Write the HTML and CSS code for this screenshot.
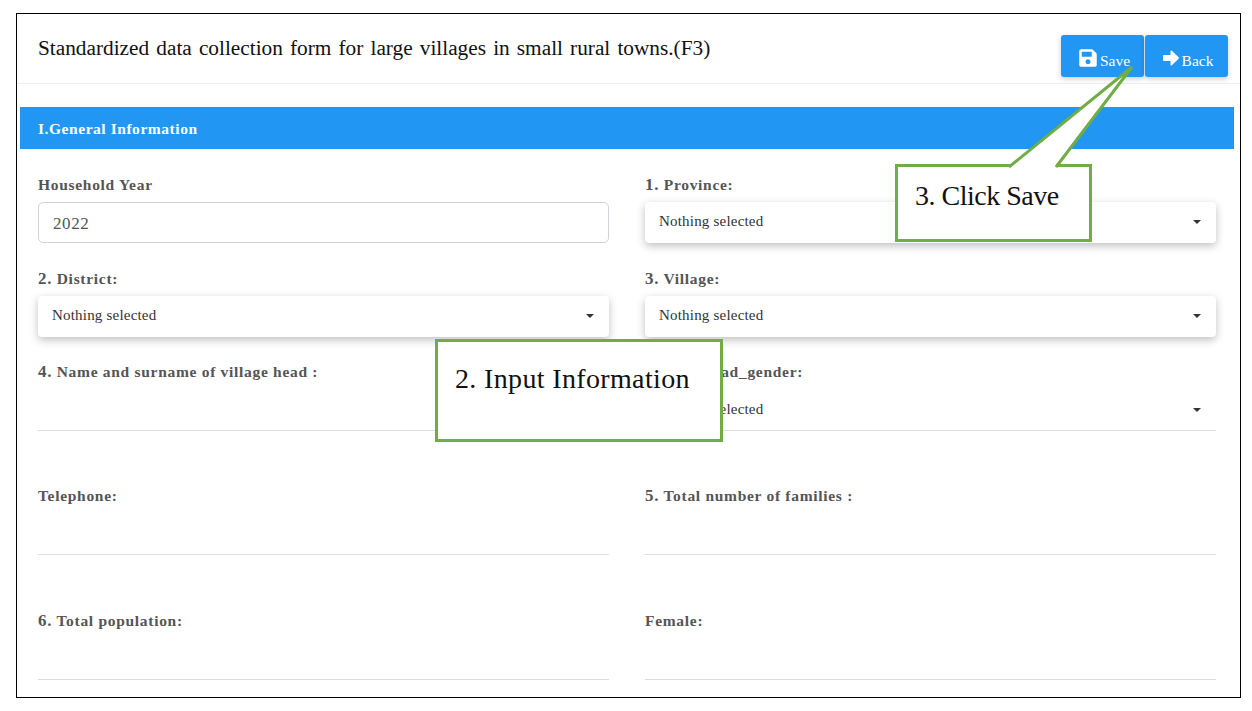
FILE: index.html
```html
<!DOCTYPE html>
<html lang="en">
<head>
<meta charset="utf-8">
<title>Standardized data collection form</title>
<link rel="stylesheet" href="styles.css">
</head>
<body>
<main class="frame">
  <header class="top">
    <h1 class="title">Standardized data collection form for large villages in small rural towns.(F3)</h1>
    <div class="actions">
      <button class="btn" type="button">
        <svg class="ico" viewBox="0 0 448 512"><path fill="#fff" d="M433.941 129.941l-83.882-83.882A48 48 0 0 0 316.118 32H48C21.49 32 0 53.49 0 80v352c0 26.51 21.49 48 48 48h352c26.51 0 48-21.49 48-48V163.882a48 48 0 0 0-14.059-33.941zM224 416c-35.346 0-64-28.654-64-64 0-35.346 28.654-64 64-64s64 28.654 64 64c0 35.346-28.654 64-64 64zm96-304.52V212c0 6.627-5.373 12-12 12H76c-6.627 0-12-5.373-12-12V108c0-6.627 5.373-12 12-12h228.52c3.183 0 6.235 1.264 8.485 3.515l3.48 3.48A11.996 11.996 0 0 1 320 111.48z"/></svg>
        <span>Save</span>
      </button>
      <button class="btn" type="button">
        <svg class="ico arrow" viewBox="0 0 16 16"><path fill="#fff" d="M0 6.2Q0 5 1 5h6.5V1.2Q7.5 0 8.600 .6L15.600 7.200Q16.300 8 15.600 8.800L8.600 15.400Q7.500 16 7.500 14.800V11H1Q0 11 0 9.800z"/></svg>
        <span>Back</span>
      </button>
    </div>
  </header>

  <section class="section">
    <h2 class="bar">I.General Information</h2>
    <div class="form">
      <div class="field">
        <label class="lab">Household Year</label>
        <div class="text-input">2022</div>
      </div>
      <div class="field">
        <label class="lab"><b class="num">1.</b> Province:</label>
        <div class="select"><span>Nothing selected</span><i class="caret"></i></div>
      </div>
      <div class="field">
        <label class="lab"><b class="num">2.</b> District:</label>
        <div class="select"><span>Nothing selected</span><i class="caret"></i></div>
      </div>
      <div class="field">
        <label class="lab"><b class="num">3.</b> Village:</label>
        <div class="select"><span>Nothing selected</span><i class="caret"></i></div>
      </div>
      <div class="field">
        <label class="lab"><b class="num">4.</b> Name and surname of village head :</label>
        <div class="line"></div>
      </div>
      <div class="field">
        <label class="lab">Village_head_gender:</label>
        <div class="line plain"><span>Nothing selected</span><i class="caret"></i></div>
      </div>
      <div class="field">
        <label class="lab">Telephone:</label>
        <div class="line"></div>
      </div>
      <div class="field">
        <label class="lab"><b class="num">5.</b> Total number of families :</label>
        <div class="line"></div>
      </div>
      <div class="field">
        <label class="lab"><b class="num">6.</b> Total population:</label>
        <div class="line"></div>
      </div>
      <div class="field">
        <label class="lab">Female:</label>
        <div class="line"></div>
      </div>
    </div>
  </section>

  <div class="callout input-note"><span>2. Input Information</span></div>
  <div class="callout save-note">
    <svg class="tail" viewBox="0 0 200 100"><path fill="#fff" stroke="#70ad47" stroke-width="3" d="M114 98 237 -2 161 98"/></svg>
    <span>3. Click Save</span>
  </div>
</main>
</body>
</html>
```

FILE: styles.css
```css
* { box-sizing: border-box; }
html, body { margin: 0; padding: 0; background: #fff; }
body { padding: 13px 11px 0 16px; height: 711px; overflow: hidden; font-family: "Liberation Serif", "Times New Roman", serif; }
.frame { position: relative; height: 685px; border: 1px solid #000; overflow: hidden; background: #fff; }
.top { display: flex; justify-content: space-between; align-items: flex-start; height: 70px; padding: 21px 12px 0 21px; border-bottom: 1px solid #eee; }
.title { margin: 0; font-size: 21.3px; line-height: 26px; font-weight: 400; color: #111; word-spacing: 1.8px; }
.actions { display: flex; gap: 1px; }
.btn { display: flex; align-items: center; justify-content: center; gap: 3px; width: 83px; height: 42px; padding: 4px 0 0 4px; border: 0; border-radius: 3px; background: #2196f3; color: #fff; font: 400 15.5px "Liberation Serif", serif; box-shadow: 0 2px 5px rgba(0,0,0,.2); }
.btn span { margin-top: 6px; }
.ico { width: 18px; height: 20px; }
.ico.arrow { width: 16px; height: 16px; margin-left: -1px; }
.section { padding: 23px 6px 0 3px; }
.bar { margin: 0; height: 42px; padding: 0 18px; background: #2196f3; color: #fff; font-size: 15.5px; font-weight: 700; line-height: 43px; letter-spacing: .55px; }
.form { display: grid; grid-template-columns: 571px 571px; grid-template-rows: 94px 93px 124px 125px 80px; column-gap: 36px; padding: 27px 18px 0; }
.lab { display: block; height: 19px; margin-bottom: 7px; color: #555; font-size: 15.5px; font-weight: 700; line-height: 17px; letter-spacing: .7px; }
.num { font-size: 17px; line-height: 0; }
.text-input { height: 41px; padding: 0 14px; border: 1px solid #ced4da; border-radius: 5px; color: #555; font-size: 17px; line-height: 41px; letter-spacing: .6px; }
.select { display: flex; align-items: center; justify-content: space-between; height: 41px; padding: 0 15px 2px 14px; border-radius: 4px; background: #fff; color: #333; font-size: 15px; letter-spacing: .2px; box-shadow: 0 3px 8px rgba(0,0,0,.25); }
.caret { width: 0; height: 0; border-left: 4px solid transparent; border-right: 4px solid transparent; border-top: 4px solid #333; }
.line { height: 42px; border-bottom: 1px solid #ddd; }
.line.plain { display: flex; align-items: center; justify-content: space-between; padding: 0 15px 0 14px; color: #333; font-size: 15px; letter-spacing: .2px; }
.callout { position: absolute; z-index: 2; background: #fff; border: 3px solid #70ad47; color: #111; font-size: 28px; line-height: 32px; }
.callout span { position: relative; }
.input-note { left: 418px; top: 325px; width: 288px; height: 103px; padding: 21px 17px; letter-spacing: .35px; }
.save-note { left: 878px; top: 150px; width: 197px; height: 78px; padding: 13px 17px; letter-spacing: -.5px; }
.tail { position: absolute; left: -3px; top: -98px; width: 200px; height: 100px; overflow: visible; }
```
